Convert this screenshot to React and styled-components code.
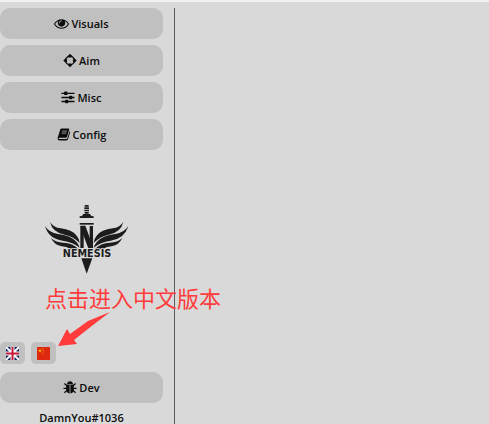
import React from "react";
import styled, { createGlobalStyle } from "styled-components";

const GlobalStyle = createGlobalStyle`
  * {
    box-sizing: border-box;
  }
  body {
    margin: 0;
    background: #d9d9d9;
    color: #0c0c0c;
    font-family: "Open Sans", "Noto Sans", "Noto Sans CJK SC", sans-serif;
  }
`;

const Page = styled.div`
  min-height: 100vh;
  display: flex;
  flex-direction: column;
  border-top: 2px solid #f1f1f1;
`;

const Layout = styled.div`
  flex: 1;
  display: grid;
  grid-template-columns: 175px 1fr;
  padding-top: 6px;
`;

const Sidebar = styled.aside`
  position: relative;
  display: flex;
  flex-direction: column;
  border-right: 1px solid #5c5c5c;
  padding-right: 11px;
`;

const Main = styled.main`
  min-width: 0;
`;

const Menu = styled.nav`
  display: flex;
  flex-direction: column;
  gap: 6px;
`;

const MenuButton = styled.button`
  display: flex;
  align-items: center;
  justify-content: center;
  gap: 2px;
  width: 100%;
  height: 31px;
  padding: 0;
  border: 0;
  border-radius: 10px;
  background: #c0c0c0;
  color: inherit;
  font: 600 11px/16px "Open Sans", "Noto Sans", sans-serif;
  cursor: pointer;

  &:hover {
    background: #b8b8b8;
  }
`;

const Icon = styled.svg`
  width: ${(props) => (props.$wide ? "15px" : "14px")};
  height: 15px;
  margin-bottom: 1px;
  fill: currentColor;
`;

const LogoBox = styled.div`
  display: flex;
  justify-content: center;
  padding: 54px 0 68px;
  margin-left: 10px;
`;

const Languages = styled.div`
  display: flex;
  gap: 6px;
  margin-bottom: 8px;
`;

const FlagButton = styled.button`
  display: flex;
  align-items: center;
  justify-content: center;
  width: 25px;
  height: 22px;
  padding: 0;
  border: 0;
  border-radius: 5px;
  background: #c0c0c0;
  cursor: pointer;
`;

const User = styled.div`
  margin-top: 9px;
  text-align: center;
  font-size: 11px;
  font-weight: 600;
  line-height: 12px;
`;

const Hint = styled.div`
  position: absolute;
  top: 275px;
  left: 45px;
  color: #ff3b3b;
  font-family: "Noto Sans CJK SC", sans-serif;
  font-size: 22px;
  line-height: 28px;
  white-space: nowrap;
  pointer-events: none;
`;

const HintArrow = styled.svg`
  display: block;
  width: 54px;
  height: 36px;
  margin-left: 12px;
  fill: #ff3b3b;
`;

const EyeIcon = () => (
  <Icon $wide viewBox="0 0 1792 1792" aria-hidden="true">
    <path d="M1664 960q-152-236-381-353 61 104 61 225 0 185-131.500 316.500t-316.500 131.500-316.500-131.500-131.500-316.500q0-121 61-225-229 117-381 353 133 205 333.500 326.500t434.500 121.500 434.500-121.500 333.500-326.500zm-720-384q0-20-14-34t-34-14q-125 0-214.500 89.500t-89.500 214.500q0 20 14 34t34 14 34-14 14-34q0-86 61-147t147-61q20 0 34-14t14-34zm848 384q0 34-20 69-140 230-376.500 368.500t-499.500 138.500-499.500-139-376.500-368q-20-35-20-69t20-69q140-229 376.500-368t499.500-139 499.500 139 376.500 368q20 35 20 69z" />
  </Icon>
);

const AimIcon = () => (
  <Icon viewBox="0 0 15 15" aria-hidden="true">
    <circle cx="7.5" cy="7.5" r="4.6" fill="none" stroke="currentColor" strokeWidth="1.5" />
    <path d="M7.500.3 9.900 2.700 8.400 4.400H6.600L5.100 2.700zM7.500 14.700 5.100 12.300l1.500-1.700h1.800l1.500 1.700zM.3 7.500l2.400-2.400 1.700 1.500v1.800L2.700 9.900zM14.700 7.500l-2.400 2.400-1.700-1.500V6.600l1.700-1.500z" />
  </Icon>
);

const SlidersIcon = () => (
  <Icon viewBox="0 0 15 15" aria-hidden="true">
    <path d="M.5 2.300h14v1.500H.5zM.5 6.700h14v1.500H.5zM.5 11.100h14v1.500H.5z" />
    <rect x="3.300" y="1.200" width="3.600" height="3.700" rx="1" />
    <rect x="8.600" y="5.600" width="3.600" height="3.700" rx="1" />
    <rect x="4.300" y="10" width="3.600" height="3.700" rx="1" />
  </Icon>
);

const BookIcon = () => (
  <Icon viewBox="0 0 15 15" aria-hidden="true">
    <path
      fillRule="evenodd"
      d="M5 1h7.200q1.200 0 .9 1.200L10.800 10q-.3 1-1.300 1H2.600q-.9 0-.8.700.1.600.9.600h7.500q.7 0 .9-.7l2.300-7.700q.9.500.6 1.400l-2.200 7.300q-.4 1.200-1.700 1.200H2.700Q.9 13.800.7 12q-.1-.8.200-1.500L3.400 2.300Q3.800 1 5 1zm.7 2.500-.3.900h5l.3-.9zm-.6 2-.3.900h5l.3-.9z"
    />
  </Icon>
);

const BugIcon = () => (
  <Icon viewBox="0 0 15 15" aria-hidden="true">
    <path d="M4.300 3.900Q4.500.7 7.500.7t3.200 3.200zM3.400 4.600h3.700v9.300Q3.400 13.500 3.400 10zM7.900 4.600h3.700V10q0 3.500-3.700 3.900z" />
    <path
      d="M1.500 3.200 4.500 6M13.500 3.200l-3 2.800M.5 8.400h4M14.500 8.400h-4M1.500 13.200l3-2.900M13.500 13.200l-3-2.900"
      fill="none"
      stroke="currentColor"
      strokeWidth="1.400"
    />
  </Icon>
);

const Logo = () => (
  <svg width="83" height="70" viewBox="15 13 249 210" fill="#1c1c1c" role="img" aria-label="Nemesis">
    <path d="M134 16h12v5h-12zM133 23h14v5h-14zM133 30h14v5h-14zM134 37h12v5h-12zM130 43h20l4 6 7 1v5h-42v-5l7-1z" />
    <path d="M119 70h42v5h-42z" />
    <path d="M121 79h10v66h-10zM149 79h10v66h-10z" />
    <path d="M122 78h14l22 60v8h-13l-22-58z" />
    <g id="wing">
      <path d="M30 66Q40 84 62 86 96 90 110 108 118 117 119 130 101 111 74 105 37 98 30 66z" />
      <path d="M15 79Q27 99 54 103 91 107 109 126 116 134 119 144 99 127 68 123 26 118 15 79z" />
      <path d="M33 115Q48 129 70 129 99 130 115 148H91Q80 141 65 140 43 136 33 115z" />
    </g>
    <use href="#wing" transform="matrix(-1 0 0 1 280 0)" />
    <text
      x="141"
      y="171"
      textAnchor="middle"
      fontFamily="DejaVu Sans, sans-serif"
      fontWeight="700"
      fontSize="29"
      stroke="#d9d9d9"
      strokeWidth="5"
      paintOrder="stroke"
    >
      NEMESIS
    </text>
    <path d="M124 176h33l-17 46z" />
  </svg>
);

const UkFlag = () => (
  <svg width="13" height="13" viewBox="0 0 26 26" aria-hidden="true">
    <path fill="#10205f" d="M0 0h26v26H0z" />
    <path stroke="#fff" strokeWidth="4" d="m0 0 26 26M26 0 0 26" />
    <path stroke="#fff" strokeWidth="8" d="M13 0v26M0 13h26" />
    <path stroke="#c8183a" strokeWidth="4" d="M13 0v26M0 13h26" />
  </svg>
);

const ChinaFlag = () => (
  <svg width="13" height="13" viewBox="0 0 26 26" aria-hidden="true">
    <path fill="#de2910" d="M0 0h26v26H0z" />
    <path fill="#ffb400" d="m6 3 1 3h3.200L7.600 8l1 3L6 9.200 3.400 11l1-3-2.600-2H5z" />
    <path fill="#f08a00" d="M10 2h2v2h-2zM12 5h2v2h-2zM12 9h2v2h-2zM9 12h2v2H9z" />
  </svg>
);

const menu = [
  { label: "Visuals", icon: EyeIcon },
  { label: "Aim", icon: AimIcon },
  { label: "Misc", icon: SlidersIcon },
  { label: "Config", icon: BookIcon },
];

const App = () => {
  return (
    <Page>
      <GlobalStyle />
      <Layout>
        <Sidebar>
          <Menu>
            {menu.map(({ label, icon: ItemIcon }) => (
              <MenuButton key={label} type="button">
                <ItemIcon />
                {label}
              </MenuButton>
            ))}
          </Menu>
          <LogoBox>
            <Logo />
          </LogoBox>
          <Languages>
            <FlagButton type="button" aria-label="English">
              <UkFlag />
            </FlagButton>
            <FlagButton type="button" aria-label="中文">
              <ChinaFlag />
            </FlagButton>
          </Languages>
          <MenuButton type="button">
            <BugIcon />
            Dev
          </MenuButton>
          <User>DamnYou#1036</User>
          <Hint>
            点击进入中文版本
            <HintArrow viewBox="0 0 54 36" aria-hidden="true">
              <path d="M1 35 10 18l3 5L31 10 53 1 36 14 17 29l3 4z" />
            </HintArrow>
          </Hint>
        </Sidebar>
        <Main />
      </Layout>
    </Page>
  );
};

export default App;
